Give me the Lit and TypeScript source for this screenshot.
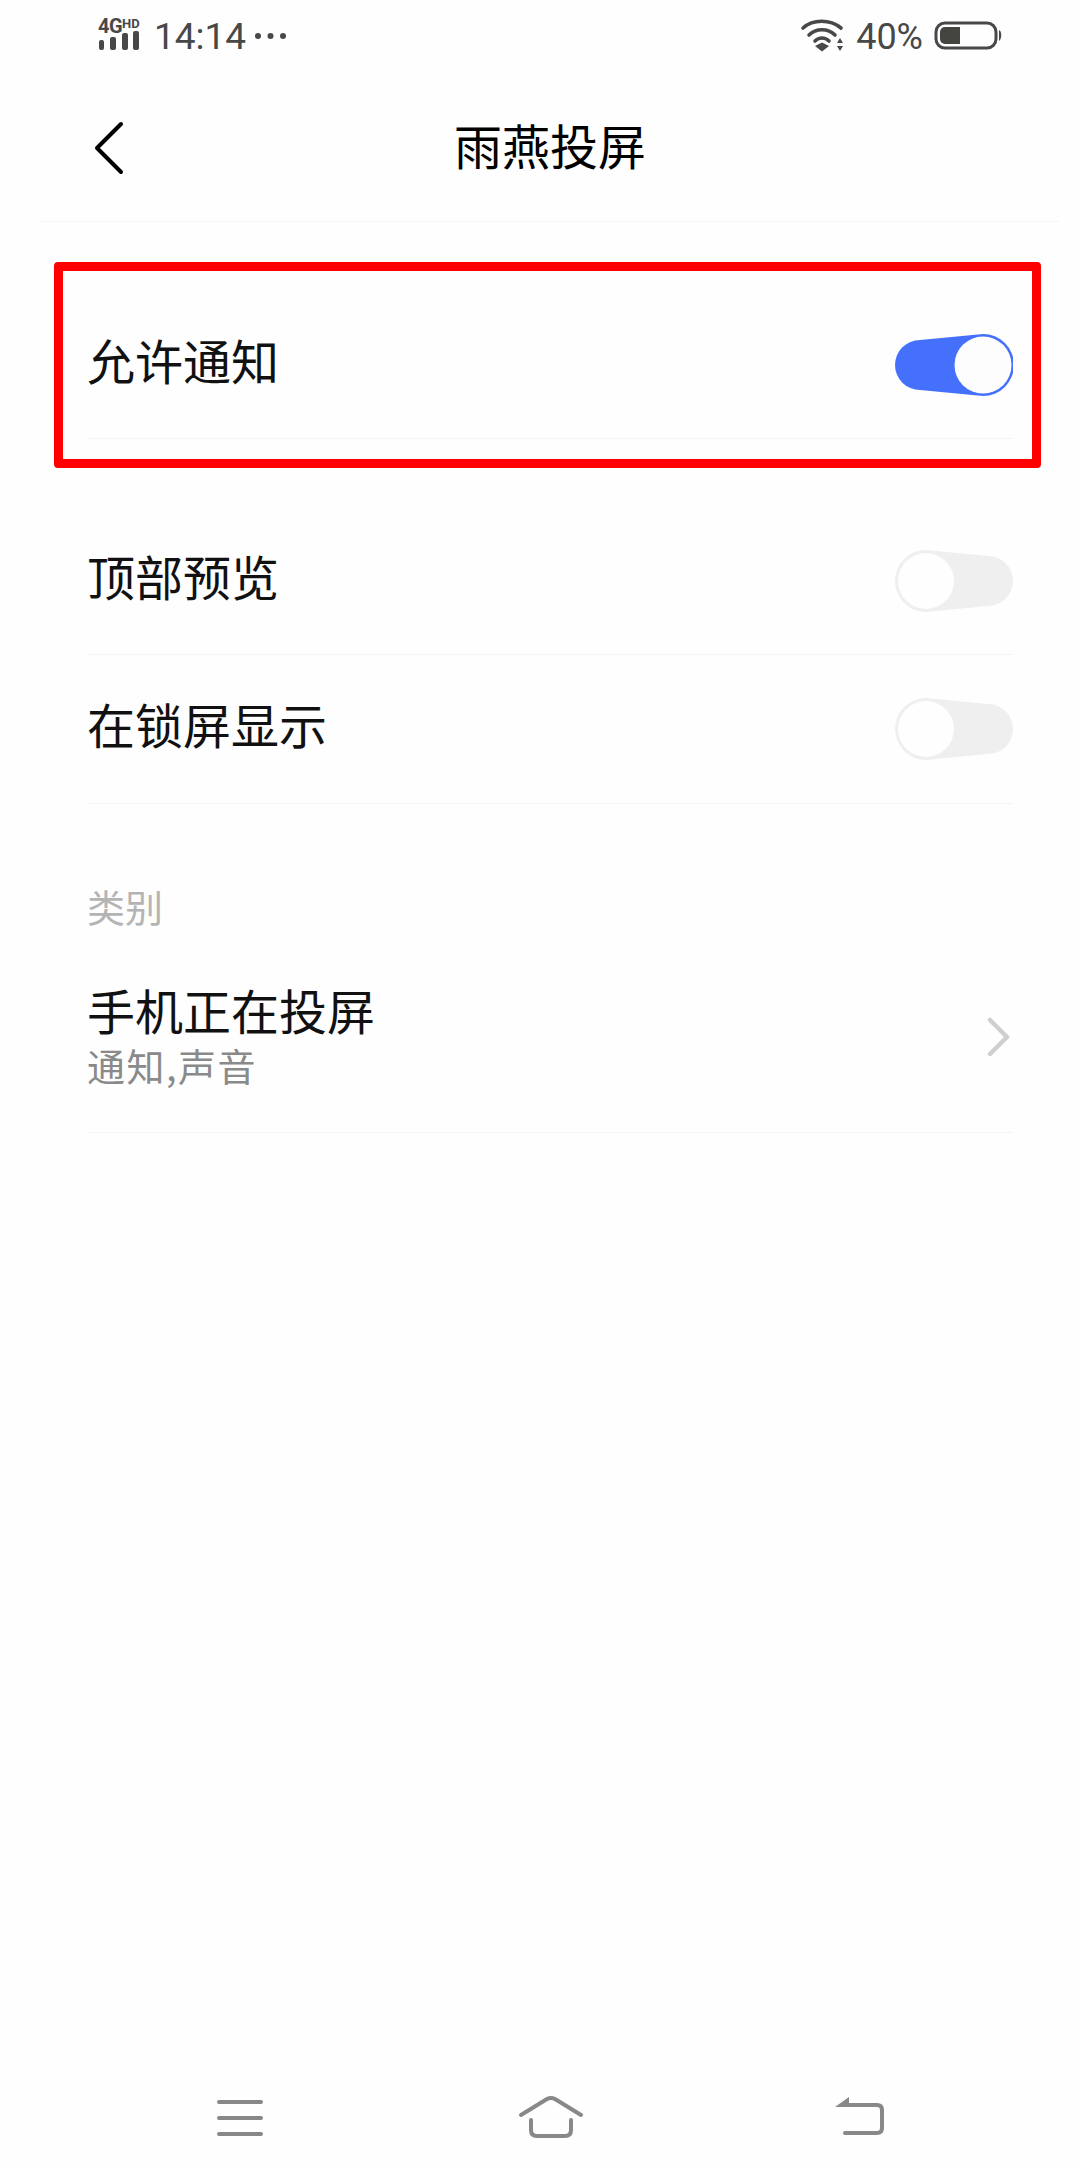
import { LitElement, css, html, svg } from 'lit';
import { customElement, property } from 'lit/decorators.js';

@customElement('app-switch')
export class AppSwitch extends LitElement {

	@property({ type: Boolean }) on = false;

	static styles = css`
		:host {
			display: block;
			width: 118px;
			height: 62px;
		}
		svg {
			display: block;
		}
	`

	render() {
		return html`
			<svg width="118" height="62" viewBox="0 0 118 62">
				${this.on
					? svg`
						<path d="M25 6 L88 0 A31 31 0 0 1 88 62 L25 56 A25 25 0 0 1 25 6 Z" fill="#4470fb"></path>
						<circle cx="88" cy="31" r="28.5" fill="#fdfdfd"></circle>`
					: svg`
						<path d="M31 0 L93 6 A25 25 0 0 1 93 56 L31 62 A31 31 0 0 1 31 0 Z" fill="#efefef"></path>
						<circle cx="31" cy="31" r="28" fill="#fefefe"></circle>`}
			</svg>
		`
	}
}

@customElement('app-root')
export class AppRoot extends LitElement {

	static styles = css`
		:host {
			display: flex;
			flex-direction: column;
			width: 1080px;
			height: 2166px;
			background: #fefefe;
			font-family: 'Noto Sans CJK SC', 'Noto Sans', sans-serif;
			overflow: hidden;
		}
		svg {
			display: block;
			flex: none;
		}

		.status {
			height: 72px;
			flex: none;
			display: flex;
			align-items: center;
			padding: 0 78px 0 98px;
			color: #484848;
			font-family: Roboto, sans-serif;
		}
		.signal {
			width: 42px;
			align-self: flex-start;
			padding-top: 16px;
		}
		.network {
			height: 15px;
			font-size: 20px;
			line-height: 15px;
			font-weight: 700;
			white-space: nowrap;
			letter-spacing: -0.5px;
		}
		.network small {
			font-size: 13px;
			vertical-align: 5px;
			letter-spacing: 0;
		}
		.time {
			font-size: 37px;
			line-height: 42px;
			margin-left: 14px;
			margin-top: 2px;
		}
		.dots {
			margin-left: 8px;
		}
		.spacer {
			flex: 1;
		}
		.percent {
			font-size: 36px;
			line-height: 42px;
			margin: 2px 11px 0 10px;
		}

		.nav {
			height: 150px;
			flex: none;
			position: relative;
			display: flex;
			align-items: center;
			justify-content: center;
			margin: 0 20px 0 40px;
			border-bottom: 1px solid #f6f6f6;
			box-sizing: border-box;
		}
		.back {
			position: absolute;
			left: 53px;
			top: 48px;
		}
		.title {
			font-size: 48px;
			line-height: 56px;
			color: #000;
			margin-bottom: 5px;
		}

		.group {
			position: relative;
			margin-top: 69px;
		}
		.group + .group {
			margin-top: 68px;
		}
		.row {
			height: 148px;
			margin: 0 67px 0 87px;
			box-sizing: border-box;
			border-bottom: 1px solid #f5f5f5;
			display: flex;
			align-items: center;
			justify-content: space-between;
		}
		.row + .row {
			height: 149px;
		}
		.label {
			font-size: 48px;
			line-height: 56px;
			color: #111;
		}
		.row > .label {
			margin-bottom: 12px;
		}
		.highlight {
			position: absolute;
			left: 54px;
			top: -29px;
			width: 987px;
			height: 206px;
			box-sizing: border-box;
			border: 9px solid #ff0000;
			border-radius: 4px;
			pointer-events: none;
		}

		.category {
			margin: 76px 0 0 87px;
			font-size: 38px;
			line-height: 52px;
			color: #b4b4b4;
		}
		.row.tall {
			height: 201px;
			padding-top: 49px;
			align-items: flex-start;
		}
		.sub {
			margin-top: 6px;
			font-size: 38px;
			line-height: 44px;
			letter-spacing: 1.5px;
			color: #8a8a8a;
		}
		.chevron {
			margin: 36px 3px 0 0;
		}

		.bottom {
			margin-top: auto;
			height: 72px;
			flex: none;
			display: flex;
			align-items: flex-start;
			padding-left: 214px;
			box-sizing: border-box;
		}
		.home {
			margin-left: 250px;
		}
		.return {
			margin-left: 247px;
		}
	`

	render() {
		return html`
			<div class="status">
				<div class="signal">
					<div class="network">4G<small>HD</small></div>
					<svg width="42" height="19" viewBox="0 0 42 19" fill="#484848">
						<rect x="1" y="9" width="5" height="10" rx="2"></rect>
						<rect x="12" y="6" width="6" height="13" rx="2"></rect>
						<rect x="24" y="2" width="6" height="17" rx="2"></rect>
						<rect x="35" y="0" width="6" height="19" rx="2"></rect>
					</svg>
				</div>
				<div class="time">14:14</div>
				<svg class="dots" width="32" height="8" viewBox="0 0 32 8" fill="#484848">
					<circle cx="4" cy="4" r="3"></circle>
					<circle cx="16.500" cy="4" r="3"></circle>
					<circle cx="29" cy="4" r="3"></circle>
				</svg>
				<div class="spacer"></div>
				<svg width="46" height="34" viewBox="0 0 46 34" fill="none" stroke="#484848" stroke-width="3.600" stroke-linecap="round">
					<path d="M3 9 C13 0 30 0 41 9"></path>
					<path d="M9 16 C16 9 28 9 35 16"></path>
					<path d="M15 22 C19 18 25 18 29 22"></path>
					<path d="M15 27 L22 23.500 L29 27 L22 32.500 Z" fill="#484848" stroke="none"></path>
					<path d="M37 24 L40 19 L43 24 Z M37 27 L43 27 L40 32 Z" fill="#484848" stroke="none"></path>
				</svg>
				<div class="percent">40%</div>
				<svg width="68" height="30" viewBox="0 0 68 30" fill="none">
					<rect x="2" y="2" width="60" height="25" rx="9" stroke="#484848" stroke-width="3"></rect>
					<path d="M11 6 H26 V23 H11 A5 5 0 0 1 6 18 V11 A5 5 0 0 1 11 6 Z" fill="#444440"></path>
					<path d="M65 9 C68 10 68 18 65 20 Z" fill="#484848"></path>
				</svg>
			</div>

			<div class="nav">
				<svg class="back" width="32" height="56" viewBox="0 0 32 56" fill="none" stroke="#000" stroke-width="4" stroke-linecap="round" stroke-linejoin="round">
					<path d="M28 4 L4 28 L28 52"></path>
				</svg>
				<div class="title">雨燕投屏</div>
			</div>

			<div class="group">
				<div class="row">
					<div class="label">允许通知</div>
					<app-switch on></app-switch>
				</div>
				<div class="highlight"></div>
			</div>

			<div class="group">
				<div class="row">
					<div class="label">顶部预览</div>
					<app-switch></app-switch>
				</div>
				<div class="row">
					<div class="label">在锁屏显示</div>
					<app-switch></app-switch>
				</div>
			</div>

			<div class="category">类别</div>
			<div class="row tall">
				<div>
					<div class="label">手机正在投屏</div>
					<div class="sub">通知,声音</div>
				</div>
				<svg class="chevron" width="24" height="40" viewBox="0 0 24 40" fill="none" stroke="#cfcfcf" stroke-width="4.500" stroke-linecap="round" stroke-linejoin="round">
					<path d="M4 3 L21 20 L4 37"></path>
				</svg>
			</div>

			<div class="bottom">
				<svg width="52" height="44" viewBox="0 0 52 44" fill="none" stroke="#888" stroke-width="4" stroke-linecap="round">
					<path d="M5 8 H47 M5 24 H47 M5 40 H47"></path>
				</svg>
				<svg class="home" width="70" height="46" viewBox="0 0 70 46" fill="none" stroke="#888" stroke-width="4" stroke-linecap="round" stroke-linejoin="round">
					<path d="M5 21 L31 5 Q35 3 39 5 L65 21"></path>
					<path d="M15 26 V36 Q15 42 21 42 H49 Q55 42 55 36 V26"></path>
				</svg>
				<svg class="return" width="52" height="44" viewBox="0 0 52 44" fill="none" stroke="#888" stroke-width="4" stroke-linecap="round" stroke-linejoin="round">
					<path d="M10 11 H44 Q49 11 49 16 V34 Q49 39 44 39 H12"></path>
					<path d="M2 13 L16 3 V13 Z" fill="#888" stroke="none"></path>
				</svg>
			</div>
		`
	}
}
